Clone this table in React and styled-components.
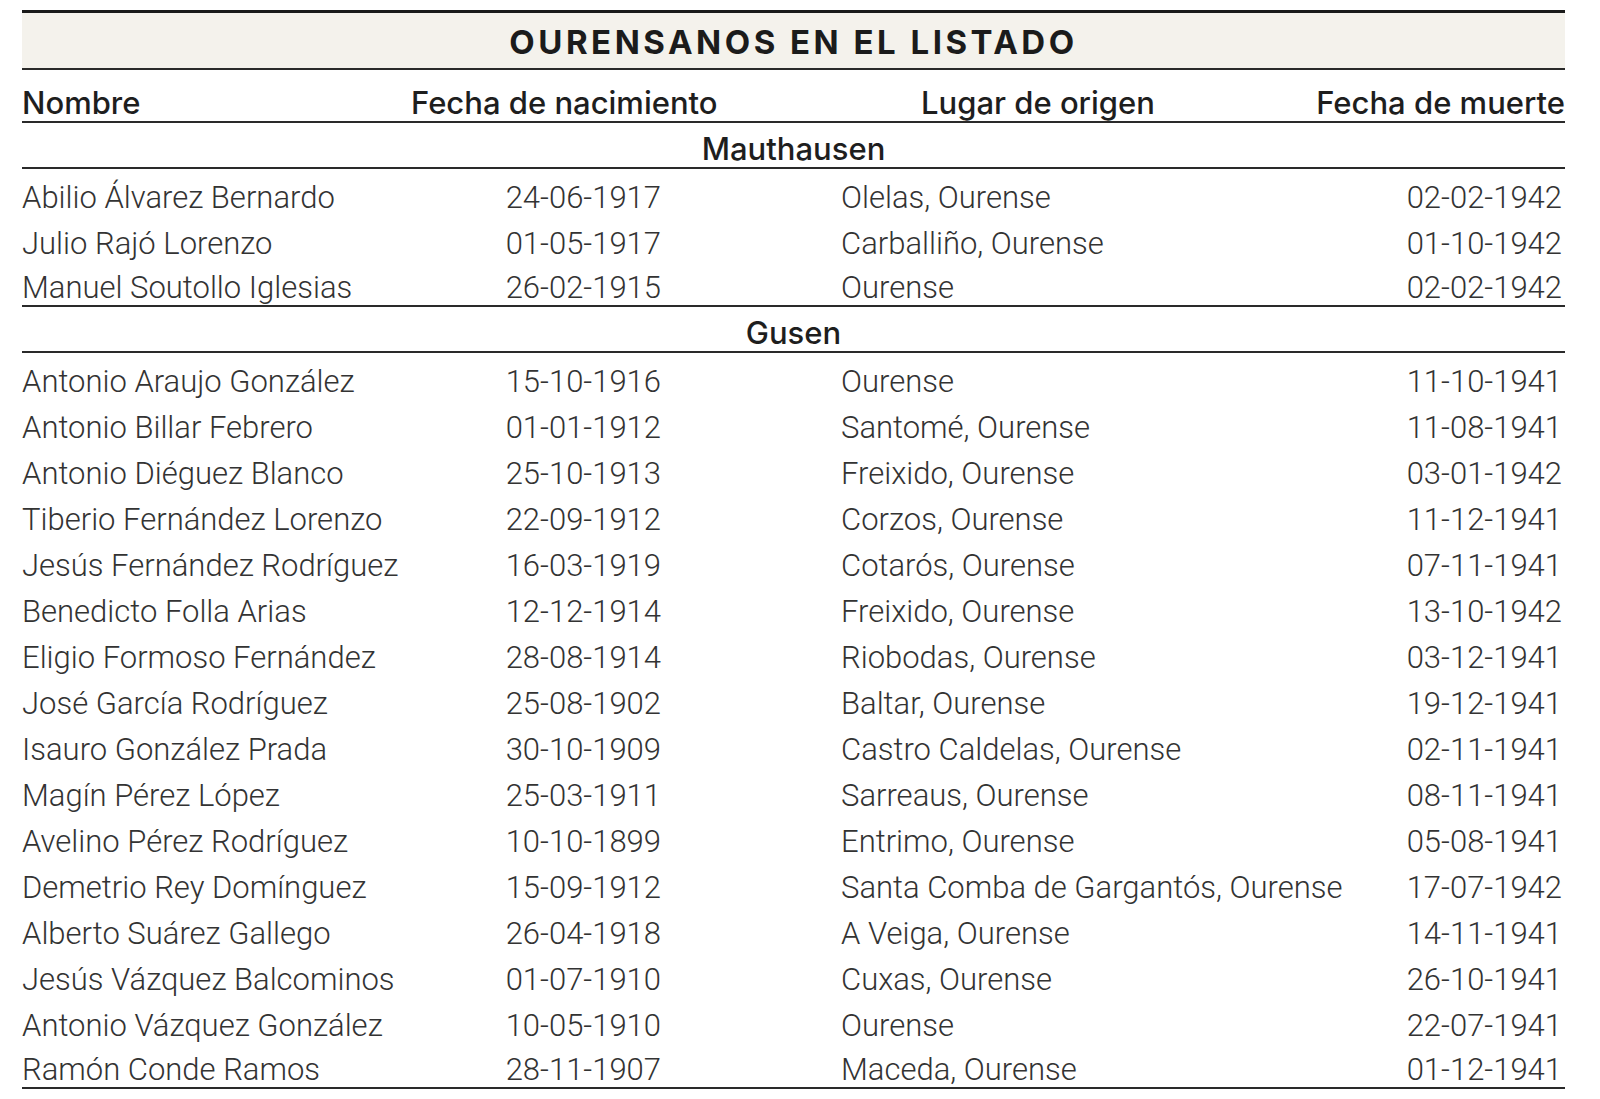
import React from "react";
import styled, { createGlobalStyle } from "styled-components";

const Global = createGlobalStyle`
  html, body { margin: 0; padding: 0; background: #ffffff; }
  body { font-family: "Liberation Sans", Arial, sans-serif; }
`;

const Page = styled.div`
  padding: 10px 0 0 22px;
  width: 1543px;
`;

const Title = styled.h1`
  margin: 0;
  height: 60px;
  border-top: 3px solid #1a1a1a;
  border-bottom: 2px solid #2a2a2a;
  background: #f4f2ec;
  display: flex;
  align-items: center;
  justify-content: center;
  font-family: Inter, "Liberation Sans", sans-serif;
  font-weight: 700;
  font-size: 33px;
  letter-spacing: 3.5px;
  color: #1b1b1b;
  padding-top: 2px;
  box-sizing: border-box;
`;

const HeaderRow = styled.div`
  display: grid;
  grid-template-columns: 389px 510px 1fr auto;
  align-items: end;
  height: 53px;
  border-bottom: 2px solid #2a2a2a;
  box-sizing: border-box;
`;

const HeaderCell = styled.div`
  font-family: Inter, "Liberation Sans", sans-serif;
  font-weight: 500;
  font-size: 31px;
  color: #1e1e1e;
  line-height: 36px;
  text-align: ${(p) => p.$align || "left"};
`;

const SectionLabel = styled.div`
  height: 46px;
  border-bottom: 2px solid #2a2a2a;
  box-sizing: border-box;
  display: flex;
  align-items: flex-end;
  justify-content: center;
  font-family: Inter, "Liberation Sans", sans-serif;
  font-weight: 500;
  font-size: 31px;
  line-height: 36px;
  color: #1e1e1e;
`;

const Row = styled.div`
  display: grid;
  grid-template-columns: 441px 198px 1fr auto;
  align-items: end;
  height: 46px;
  box-sizing: border-box;
  border-bottom: ${(p) => (p.$last ? "2px solid #2a2a2a" : "none")};
  font-family: Roboto, "Liberation Sans", sans-serif;
  font-weight: 300;
  font-size: 31px;
  line-height: 34px;
  color: #333333;
`;

const Cell = styled.div`
  white-space: nowrap;
  text-align: ${(p) => p.$align || "left"};
  padding-left: ${(p) => p.$indent || 0}px;
  padding-right: ${(p) => p.$inset || 0}px;
`;

const sections = [
  {
    name: "Mauthausen",
    rows: [
      ["Abilio Álvarez Bernardo", "24-06-1917", "Olelas, Ourense", "02-02-1942"],
      ["Julio Rajó Lorenzo", "01-05-1917", "Carballiño, Ourense", "01-10-1942"],
      ["Manuel Soutollo Iglesias", "26-02-1915", "Ourense", "02-02-1942"],
    ],
  },
  {
    name: "Gusen",
    rows: [
      ["Antonio Araujo González", "15-10-1916", "Ourense", "11-10-1941"],
      ["Antonio Billar Febrero", "01-01-1912", "Santomé, Ourense", "11-08-1941"],
      ["Antonio Diéguez Blanco", "25-10-1913", "Freixido, Ourense", "03-01-1942"],
      ["Tiberio Fernández Lorenzo", "22-09-1912", "Corzos, Ourense", "11-12-1941"],
      ["Jesús Fernández Rodríguez", "16-03-1919", "Cotarós, Ourense", "07-11-1941"],
      ["Benedicto Folla Arias", "12-12-1914", "Freixido, Ourense", "13-10-1942"],
      ["Eligio Formoso Fernández", "28-08-1914", "Riobodas, Ourense", "03-12-1941"],
      ["José García Rodríguez", "25-08-1902", "Baltar, Ourense", "19-12-1941"],
      ["Isauro González Prada", "30-10-1909", "Castro Caldelas, Ourense", "02-11-1941"],
      ["Magín Pérez López", "25-03-1911", "Sarreaus, Ourense", "08-11-1941"],
      ["Avelino Pérez Rodríguez", "10-10-1899", "Entrimo, Ourense", "05-08-1941"],
      ["Demetrio Rey Domínguez", "15-09-1912", "Santa Comba de Gargantós, Ourense", "17-07-1942"],
      ["Alberto Suárez Gallego", "26-04-1918", "A Veiga, Ourense", "14-11-1941"],
      ["Jesús Vázquez Balcominos", "01-07-1910", "Cuxas, Ourense", "26-10-1941"],
      ["Antonio Vázquez González", "10-05-1910", "Ourense", "22-07-1941"],
      ["Ramón Conde Ramos", "28-11-1907", "Maceda, Ourense", "01-12-1941"],
    ],
  },
];

export default function App() {
  return (
    <>
      <Global />
      <Page>
        <Title>OURENSANOS EN EL LISTADO</Title>
        <HeaderRow>
          <HeaderCell>Nombre</HeaderCell>
          <HeaderCell>Fecha de nacimiento</HeaderCell>
          <HeaderCell>Lugar de origen</HeaderCell>
          <HeaderCell $align="right">Fecha de muerte</HeaderCell>
        </HeaderRow>
        {sections.map((s) => (
          <React.Fragment key={s.name}>
            <SectionLabel>{s.name}</SectionLabel>
            {s.rows.map((r, i) => (
              <Row key={r[0]} $last={i === s.rows.length - 1}>
                <Cell>{r[0]}</Cell>
                <Cell $align="right">{r[1]}</Cell>
                <Cell $indent={180}>{r[2]}</Cell>
                <Cell $align="right" $inset={3}>{r[3]}</Cell>
              </Row>
            ))}
          </React.Fragment>
        ))}
      </Page>
    </>
  );
}
